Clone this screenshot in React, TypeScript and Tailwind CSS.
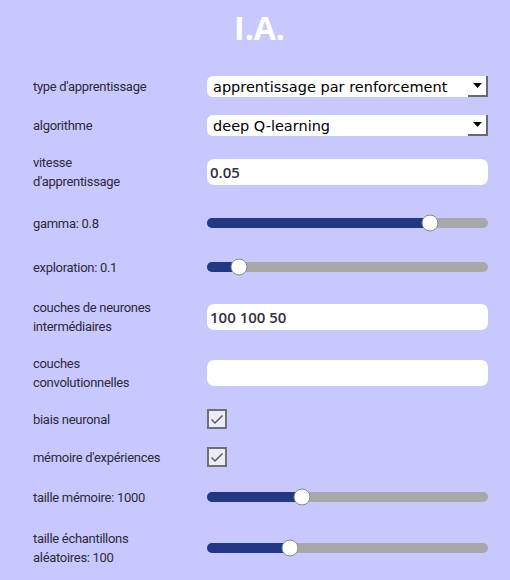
import React from "react";

const label = "text-[13px] tracking-[-0.3px] leading-[19px] text-[#2e2a3a]";

function Row({ h, text, children }: { h: string; text: React.ReactNode; children?: React.ReactNode }) {
  return (
    <div className={`flex items-center ${h}`}>
      <div className={`pl-[33px] shrink-0 ${label}`} style={{ width: 207, fontFamily: 'Roboto, "Noto Sans", sans-serif' }}>
        {text}
      </div>
      <div className="flex-1 pr-[22px] flex items-center">{children}</div>
    </div>
  );
}

function Select({ value }: { value: string }) {
  return (
    <div className="flex w-[281px] h-[21px] bg-white rounded-l-[6px] overflow-hidden">
      <div
        className="flex-1 pl-[6px] text-[14.5px] leading-[22px] text-black whitespace-nowrap overflow-hidden"
        style={{ fontFamily: '"DejaVu Sans", Verdana, sans-serif', height: 19 }}
      >
        {value}
      </div>
      <div className="w-[20px] h-[21px] bg-white border-r-2 border-b-2 border-r-[#6a6a6a] border-b-[#6a6a6a] flex items-center justify-center">
        <svg width="9" height="5" viewBox="0 0 9 5">
          <polygon points="0,0 9,0 4.5,5" fill="#000" />
        </svg>
      </div>
    </div>
  );
}

function TextInput({ value }: { value: string }) {
  return (
    <div className="w-[281px] h-[26px] bg-white rounded-[7px] pl-[3px] flex items-center text-[15px] font-semibold text-[#33303c]">
      {value}
    </div>
  );
}

function Slider({ pos }: { pos: number }) {
  return (
    <div className="relative w-[281px] h-[10px] rounded-full bg-[#a8a8a8]">
      <div className="absolute left-0 top-0 h-[10px] rounded-full bg-[#233885]" style={{ width: pos }} />
      <div
        className="absolute top-1/2 w-[17px] h-[17px] -translate-y-1/2 -translate-x-1/2 rounded-full bg-white border border-[#8a8a8a]"
        style={{ left: pos }}
      />
    </div>
  );
}

function Check() {
  return (
    <div className="w-[20px] h-[20px] border-2 border-[#707070] bg-[#ececf6] flex items-center justify-center">
      <svg width="14" height="11" viewBox="0 0 14 11">
        <polyline points="1.5,5.5 5,9 12.5,1.5" fill="none" stroke="#5a5a5a" strokeWidth="1.5" />
      </svg>
    </div>
  );
}

export default function App() {
  return (
    <div
      className="w-[510px] h-[580px] bg-[#c8c8fe] overflow-hidden"
      style={{ fontFamily: '"Open Sans", "Noto Sans", sans-serif' }}
    >
      <div className="h-[66px] flex items-center justify-center pb-[10px] pl-[9px]">
        <div className="text-[32px] font-bold text-white leading-none">I.A.</div>
      </div>
      <Row h="h-[40px]" text="type d'apprentissage">
        <Select value="apprentissage par renforcement" />
      </Row>
      <Row h="h-[38px]" text="algorithme">
        <Select value="deep Q-learning" />
      </Row>
      <Row h="h-[56px]" text={<>vitesse<br />d'apprentissage</>}>
        <TextInput value="0.05" />
      </Row>
      <Row h="h-[46px]" text="gamma: 0.8">
        <Slider pos={223} />
      </Row>
      <Row h="h-[42px]" text="exploration: 0.1">
        <Slider pos={32} />
      </Row>
      <Row h="h-[58px]" text={<>couches de neurones<br />intermédiaires</>}>
        <TextInput value="100 100 50" />
      </Row>
      <Row h="h-[54px]" text={<>couches<br />convolutionnelles</>}>
        <TextInput value="" />
      </Row>
      <Row h="h-[38px]" text="biais neuronal">
        <Check />
      </Row>
      <Row h="h-[38px]" text="mémoire d'expériences">
        <Check />
      </Row>
      <Row h="h-[42px]" text="taille mémoire: 1000">
        <Slider pos={95} />
      </Row>
      <Row h="h-[60px]" text={<>taille échantillons<br />aléatoires: 100</>}>
        <Slider pos={83} />
      </Row>
    </div>
  );
}
